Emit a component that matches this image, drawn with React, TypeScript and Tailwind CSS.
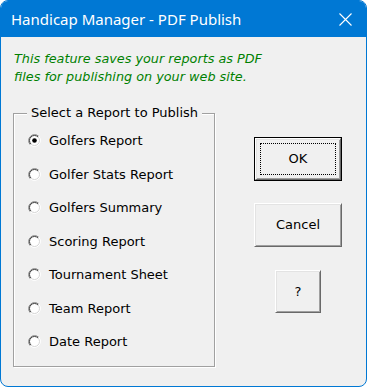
import React from 'react';

const reports = [
  'Golfers Report',
  'Golfer Stats Report',
  'Golfers Summary',
  'Scoring Report',
  'Tournament Sheet',
  'Team Report',
  'Date Report',
];

function Radio({ checked }: { checked?: boolean }) {
  return (
    <svg width="13" height="13" viewBox="0 0 13 13" className="shrink-0">
      <circle cx="6.5" cy="6.5" r="6" fill="#fff" />
      <path d="M2.26 10.74 A6 6 0 0 1 10.74 2.26" stroke="#808080" fill="none" />
      <path d="M10.74 2.26 A6 6 0 0 1 2.26 10.74" stroke="#fff" fill="none" />
      <path d="M2.96 10.04 A5 5 0 0 1 10.04 2.96" stroke="#404040" fill="none" />
      <path d="M10.04 2.96 A5 5 0 0 1 2.96 10.04" stroke="#d4d4d4" fill="none" />
      {checked && <circle cx="6.5" cy="6.5" r="2.3" fill="#000" />}
    </svg>
  );
}

function WinButton({ label, className, focused }: { label: string; className: string; focused?: boolean }) {
  const face = (
    <button className="relative flex h-full w-full items-center justify-center border border-t-white border-l-white border-r-[#696969] border-b-[#696969] bg-[#f0f0f0] text-[13px] text-black shadow-[inset_1px_1px_0_#e3e3e3,inset_-1px_-1px_0_#a0a0a0]">
      {focused && <span className="absolute inset-[4px] border border-dotted border-black" />}
      <span className="relative">{label}</span>
    </button>
  );
  if (focused) {
    return <div className={`border border-black ${className}`}>{face}</div>;
  }
  return <div className={className}>{face}</div>;
}

export default function App() {
  return (
    <div className="h-[387px] w-[367px] bg-white" style={{ fontFamily: '"DejaVu Sans", Tahoma, sans-serif' }}>
      <div className="flex h-full flex-col overflow-hidden rounded-lg border border-[#0078d4] bg-[#f0f0f0]">
        {/* Title bar */}
        <div className="flex h-[36px] shrink-0 items-center justify-between bg-[#0078d4] pl-[10px] pr-[14px]">
          <span className="text-[15px] text-white" style={{ fontFamily: '"Noto Sans", sans-serif' }}>
            Handicap Manager - PDF Publish
          </span>
          <svg width="13" height="13" viewBox="0 0 13 13">
            <path d="M0.5 0.5 L12.5 12.5 M12.5 0.5 L0.5 12.5" stroke="#fff" strokeWidth="1.1" />
          </svg>
        </div>

        <p className="mt-[13px] pl-[13px] text-[12.8px] italic leading-[18px] text-[#008000]">
          This feature saves your reports as PDF
          <br />
          files for publishing on your web site.
        </p>

        <div className="mt-[19px] flex items-start">
          <fieldset className="ml-[12px] h-[262px] w-[202px] border border-[#a0a0a0] shadow-[1px_1px_0_#fff,inset_1px_1px_0_#fff]">
            <legend className="ml-[13px] bg-[#f0f0f0] px-[4px] text-[13px] leading-[16px] text-black">
              Select a Report to Publish
            </legend>
            <ul className="pl-[14px] pt-[3px]">
              {reports.map((r, i) => (
                <li key={r} className="flex h-[33.5px] items-center gap-[8px] text-[13px] text-black">
                  <Radio checked={i === 0} />
                  <span>{r}</span>
                </li>
              ))}
            </ul>
          </fieldset>

          <div className="ml-[39px] flex flex-col items-center pt-[32px]">
            <WinButton label="OK" className="h-[44px] w-[88px]" focused />
            <WinButton label="Cancel" className="mt-[22px] h-[44px] w-[88px]" />
            <WinButton label="?" className="mt-[23px] h-[43px] w-[46px]" />
          </div>
        </div>
      </div>
    </div>
  );
}
